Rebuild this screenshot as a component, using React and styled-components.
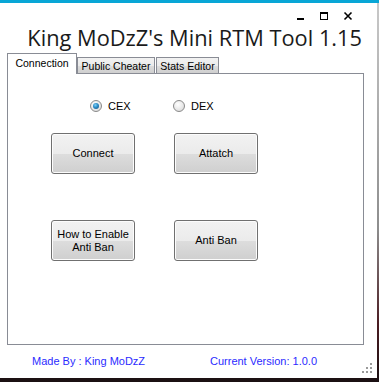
import styled, {createGlobalStyle} from 'styled-components'

const GlobalStyle = createGlobalStyle`
  html, body {
    margin: 0;
    padding: 0;
  }
  body {
    width: 379px;
    height: 382px;
    overflow: hidden;
    background: linear-gradient(180deg, #c9c9c9 0%, #8d8d8d 60%, #4a1c22 85%, #1a1012 100%);
    font-family: "Liberation Sans", Arial, sans-serif;
  }
`

const TopBar = styled.div`
  height: 3px;
  background: #08a6d6;
`

const Window = styled.div`
  width: 377px;
  height: 375px;
  background: #fff;
  display: flex;
  flex-direction: column;
`

const Controls = styled.div`
  display: flex;
  justify-content: flex-end;
  align-items: center;
  gap: 14px;
  height: 20px;
  padding: 6px 24px 0 0;
  box-sizing: border-box;

  & svg {
    display: block;
  }
`

const Title = styled.div`
  font-family: "Open Sans", "Liberation Sans", sans-serif;
  font-size: 21.8px;
  line-height: 30px;
  color: #1a1a1a;
  text-align: right;
  padding-right: 15px;
  white-space: nowrap;
`

const TabRow = styled.div`
  display: flex;
  align-items: flex-end;
  padding-left: 7px;
  height: 21px;
`

const Tab = styled.div`
  box-sizing: border-box;
  height: ${p => (p.$active ? '21px' : '17px')};
  width: ${p => p.$w}px;
  border: 1px solid #898c95;
  border-bottom: ${p => (p.$active ? 'none' : '1px solid #898c95')};
  margin-right: ${p => (p.$active ? '0' : '1px')};
  background: ${p => (p.$active ? '#fff' : 'linear-gradient(180deg, #f2f2f2 0%, #ebebeb 50%, #dddddd 51%, #cfcfcf 100%)')};
  font-size: 10.5px;
  color: #000;
  display: flex;
  align-items: center;
  justify-content: center;
  padding-bottom: ${p => (p.$active ? '3px' : '0')};
  position: relative;
  z-index: ${p => (p.$active ? 1 : 0)};
`

const Panel = styled.div`
  box-sizing: border-box;
  margin-left: 7px;
  width: 357px;
  height: 272px;
  border: 1px solid #898c95;
  margin-top: -1px;
  padding: 25px 0 0 0;
`

const RadioRow = styled.div`
  display: flex;
  padding-left: 82px;
  height: 13px;
  align-items: center;
`

const RadioItem = styled.label`
  display: flex;
  align-items: center;
  width: 83px;
  font-size: 11px;
  color: #000;
  gap: 6px;
`

const RadioCircle = styled.span`
  box-sizing: border-box;
  width: 12px;
  height: 12px;
  border-radius: 50%;
  border: 1px solid #8a8a8a;
  background: radial-gradient(circle at 40% 35%, #ffffff 0%, #e6e6e6 60%, #cfcfcf 100%);
  display: flex;
  align-items: center;
  justify-content: center;

  &::after {
    content: '';
    display: ${p => (p.$checked ? 'block' : 'none')};
    width: 6px;
    height: 6px;
    border-radius: 50%;
    background: radial-gradient(circle at 40% 35%, #7fd0f5 0%, #2a8bc7 45%, #174f7a 100%);
  }
`

const ButtonGrid = styled.div`
  display: grid;
  grid-template-columns: 84px 84px;
  column-gap: 39px;
  row-gap: 46px;
  padding-left: 43px;
  margin-top: 21px;
`

const Button = styled.div`
  box-sizing: border-box;
  height: 41px;
  border: 1px solid #707070;
  border-radius: 3px;
  background: linear-gradient(180deg, #f2f2f2 0%, #ebebeb 50%, #dddddd 51%, #cfcfcf 100%);
  box-shadow: inset 0 0 0 1px #fcfcfc;
  font-size: 11px;
  line-height: 13px;
  color: #000;
  display: flex;
  align-items: center;
  justify-content: center;
  text-align: center;
`

const Footer = styled.div`
  display: flex;
  align-items: center;
  height: 32px;
  position: relative;
`

const FooterText = styled.span`
  font-size: 11px;
  color: #2b2bff;
  position: absolute;
  left: ${p => p.$x}px;
  top: 10px;
  white-space: nowrap;
`

const Grip = styled.svg`
  position: absolute;
  right: 5px;
  bottom: 4px;
`

export default function App () {
  return (
    <>
      <GlobalStyle/>
      <TopBar/>
      <Window>
        <Controls>
          <svg width='9' height='9' viewBox='0 0 9 9'>
            <rect x='1' y='6' width='7' height='2' fill='#000'/>
          </svg>
          <svg width='10' height='10' viewBox='0 0 10 10'>
            <rect x='1.5' y='1.5' width='7' height='7' fill='none' stroke='#000' strokeWidth='1'/>
            <rect x='1' y='1' width='8' height='2' fill='#000'/>
          </svg>
          <svg width='10' height='10' viewBox='0 0 10 10'>
            <path d='M1.5 1.5 L8.5 8.5 M8.5 1.5 L1.5 8.5' stroke='#000' strokeWidth='1.6'/>
          </svg>
        </Controls>
        <Title>King MoDzZ's Mini RTM Tool 1.15</Title>
        <TabRow>
          <Tab $active $w={70}>Connection</Tab>
          <Tab $w={78}>Public Cheater</Tab>
          <Tab $w={63}>Stats Editor</Tab>
        </TabRow>
        <Panel>
          <RadioRow>
            <RadioItem><RadioCircle $checked/>CEX</RadioItem>
            <RadioItem><RadioCircle/>DEX</RadioItem>
          </RadioRow>
          <ButtonGrid>
            <Button>Connect</Button>
            <Button>Attatch</Button>
            <Button>How to Enable<br/>Anti Ban</Button>
            <Button>Anti Ban</Button>
          </ButtonGrid>
        </Panel>
        <Footer>
          <FooterText $x={32}>Made By : King MoDzZ</FooterText>
          <FooterText $x={210}>Current Version: 1.0.0</FooterText>
          <Grip width='10' height='10' viewBox='0 0 10 10'>
            <rect x='8' y='0' width='2' height='2' fill='#9a9a9a'/>
            <rect x='4' y='4' width='2' height='2' fill='#9a9a9a'/>
            <rect x='8' y='4' width='2' height='2' fill='#9a9a9a'/>
            <rect x='0' y='8' width='2' height='2' fill='#9a9a9a'/>
            <rect x='4' y='8' width='2' height='2' fill='#9a9a9a'/>
            <rect x='8' y='8' width='2' height='2' fill='#9a9a9a'/>
          </Grip>
        </Footer>
      </Window>
    </>
  )
}
